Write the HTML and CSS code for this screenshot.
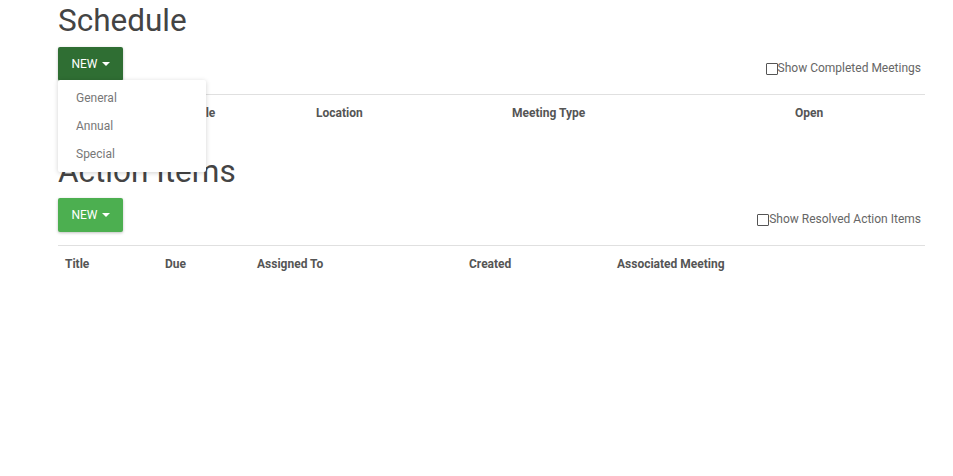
FILE: index.html
```html
<!DOCTYPE html>
<html>
<head>
<meta charset="utf-8">
<link rel="stylesheet" href="styles.css">
</head>
<body>
<div class="page">
  <section class="block">
    <h1 class="title">Schedule</h1>
    <div class="toolbar">
      <div class="btn-wrap">
        <button class="btn btn-dark">NEW <span class="caret"></span></button>
        <ul class="menu">
          <li>General</li>
          <li>Annual</li>
          <li>Special</li>
        </ul>
      </div>
      <label class="check"><span class="box"></span>Show Completed Meetings</label>
    </div>
    <table class="grid">
      <colgroup><col class="c126"><col class="c125"><col class="c196"><col class="c283"><col></colgroup>
      <thead><tr><th>Date</th><th>Title</th><th>Location</th><th>Meeting Type</th><th>Open</th></tr></thead>
    </table>
  </section>
  <section class="block block2">
    <h1 class="title">Action Items</h1>
    <div class="toolbar">
      <div class="btn-wrap">
        <button class="btn btn-light">NEW <span class="caret"></span></button>
      </div>
      <label class="check"><span class="box"></span>Show Resolved Action Items</label>
    </div>
    <table class="grid">
      <colgroup><col class="c100"><col class="c92"><col class="c212"><col class="c148"><col></colgroup>
      <thead><tr><th>Title</th><th>Due</th><th>Assigned To</th><th>Created</th><th>Associated Meeting</th></tr></thead>
    </table>
  </section>
</div>
</body>
</html>
```
FILE: styles.css
```css
* { box-sizing: border-box; }
html, body { margin: 0; padding: 0; background: #fff; }
body { font-family: Roboto, "Noto Sans", sans-serif; color: #444; }
.page { width: 867px; margin-left: 58px; padding-top: 3px; }
.title { margin: 0; font-size: 31.5px; line-height: 36px; font-weight: 400; color: #444; }
.block2 { margin-top: 24px; }
.toolbar { display: flex; justify-content: space-between; align-items: center; margin-top: 8px; }
.btn-wrap { position: relative; }
.btn {
  display: flex; align-items: center; justify-content: center; gap: 4px;
  width: 65px; height: 34px; border: none; border-radius: 2px;
  color: #fff; font-family: Roboto, sans-serif; font-size: 12px; padding: 0;
  box-shadow: 0 1px 3px rgba(0,0,0,0.25);
}
.btn-dark { background: #2f6e33; }
.btn-light { background: #4caf50; }
.caret { width: 0; height: 0; border-left: 4px solid transparent; border-right: 4px solid transparent; border-top: 4px solid #fff; }
.menu {
  position: absolute; top: 33px; left: 0; width: 148px; height: 92px;
  margin: 0; padding: 4px 0 0; list-style: none; background: #fff; z-index: 5;
  box-shadow: 0 1px 5px rgba(0,0,0,0.18); border-radius: 2px;
}
.menu li { padding-left: 18px; font-size: 12px; line-height: 28px; color: #777; }
.check { display: flex; align-items: center; font-size: 12px; color: #666; margin-right: 4px; margin-top: 7px; }
.box { width: 12px; height: 12px; border: 1px solid #555; border-radius: 1px; margin-top: 3px; }
.grid { width: 100%; border-collapse: collapse; margin-top: 13px; table-layout: fixed; }
.grid thead tr { border-top: 1px solid #e0e0e0; }
.grid th { text-align: left; font-size: 12px; font-weight: 700; color: #555; padding: 10px 7px 9px; line-height: 16px; }
.c126 { width: 126px; } .c125 { width: 125px; } .c196 { width: 196px; } .c283 { width: 283px; }
.c100 { width: 100px; } .c92 { width: 92px; } .c212 { width: 212px; } .c148 { width: 148px; }
```
